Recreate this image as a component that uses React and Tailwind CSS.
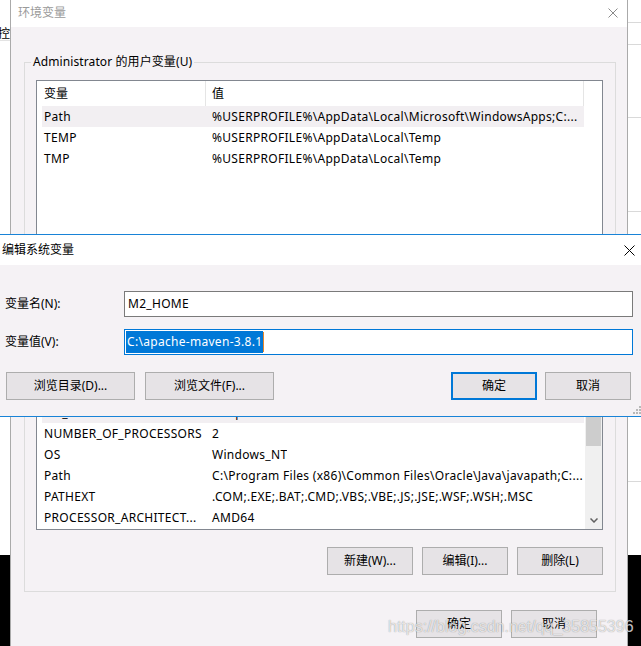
import clsx from 'clsx'

const userVars = [
  ['Path', String.raw`%USERPROFILE%\AppData\Local\Microsoft\WindowsApps;C:...`, true],
  ['TEMP', String.raw`%USERPROFILE%\AppData\Local\Temp`],
  ['TMP', String.raw`%USERPROFILE%\AppData\Local\Temp`],
]

const sysVars = [
  ['ComSpec', String.raw`C:\Windows\system32\cmd.exe`],
  ['DriverData', String.raw`C:\Windows\System32\Drivers\DriverData`],
  ['JAVA_HOME', String.raw`C:\Program Files\Java\jdk1.8.0_291`],
  ['M2_HOME', String.raw`C:\apache-maven-3.8.1`, true],
  ['NUMBER_OF_PROCESSORS', '2'],
  ['OS', 'Windows_NT'],
  ['Path', String.raw`C:\Program Files (x86)\Common Files\Oracle\Java\javapath;C:...`],
  ['PATHEXT', '.COM;.EXE;.BAT;.CMD;.VBS;.VBE;.JS;.JSE;.WSF;.WSH;.MSC'],
  ['PROCESSOR_ARCHITECT...', 'AMD64'],
]

function CloseX({ size = 10, color = '#000' }) {
  return (
    <svg width={size} height={size} viewBox={`0 0 ${size} ${size}`} className="shrink-0">
      <path d={`M0.5 0.5L${size - 0.5} ${size - 0.5}M${size - 0.5} 0.5L0.5 ${size - 0.5}`} stroke={color} strokeWidth="1" />
    </svg>
  )
}

function Btn({ children, className, primary }) {
  return (
    <div
      className={clsx(
        'flex h-[28px] w-[86px] shrink-0 items-center justify-center bg-[#e6e3e6]',
        primary ? 'border-2 border-[#0078d7]' : 'border border-[#adadad]',
        className,
      )}
    >
      {children}
    </div>
  )
}

function Row({ name, value, selected }) {
  return (
    <div className={clsx('ml-[5px] flex h-[21px] w-[542px] shrink-0 items-center tracking-[0.3px]', selected && 'bg-[#f2eff2]')}>
      <span className="w-[164px] shrink-0 overflow-hidden whitespace-nowrap pl-[2px]">{name}</span>
      <span className="overflow-hidden whitespace-nowrap pl-[6px]">{value}</span>
    </div>
  )
}

function Header() {
  return (
    <div className="ml-[5px] flex h-[25px] w-[542px] shrink-0">
      <span className="flex w-[164px] items-center border-r border-[#e5e5e5] pl-[2px]">变量</span>
      <span className="flex flex-1 items-center border-r border-[#e5e5e5] pl-[6px]">值</span>
    </div>
  )
}

function Scrollbar() {
  return (
    <div className="flex w-[17px] shrink-0 flex-col bg-[#f0f0f0]">
      <div className="flex h-[17px] shrink-0 items-center justify-center">
        <svg width="8" height="5" viewBox="0 0 8 5">
          <path d="M0.5 4.5L4 1L7.5 4.5" fill="none" stroke="#606060" strokeWidth="1.5" />
        </svg>
      </div>
      <div className="mx-[1px] mt-[23px] h-[59px] shrink-0 bg-[#cdcdcd]" />
      <div className="flex-1" />
      <div className="flex h-[17px] shrink-0 items-center justify-center">
        <svg width="8" height="5" viewBox="0 0 8 5">
          <path d="M0.5 0.5L4 4L7.5 0.5" fill="none" stroke="#606060" strokeWidth="1.5" />
        </svg>
      </div>
    </div>
  )
}

function ListBox({ rows, height, scroll }) {
  return (
    <div className={clsx('flex w-[567px] border border-[#828790] bg-white', height)}>
      <div className="flex min-w-0 flex-1 flex-col">
        <Header />
        <div className={clsx('flex min-h-0 flex-1 flex-col overflow-hidden', scroll && 'justify-end pb-[1px]')}>
          {rows.map(([n, v, s]) => (
            <Row key={n} name={n} value={v} selected={s} />
          ))}
        </div>
      </div>
      {scroll && <Scrollbar />}
    </div>
  )
}

function Group({ label, rows, listHeight, scroll, buttons, className }) {
  return (
    <fieldset className={clsx('w-[592px] border border-[#dcdcdc]', className)}>
      <legend className="ml-[6px] px-[2px] leading-[16px] tracking-[0.1px]">{label}</legend>
      <div className="px-[11px] pb-[16px] pt-[10px]">
        <ListBox rows={rows} height={listHeight} scroll={scroll} />
        <div className="mt-[17px] flex justify-end gap-[9px] pr-[1px]">
          {buttons.map((b) => (
            <Btn key={b}>{b}</Btn>
          ))}
        </div>
      </div>
    </fieldset>
  )
}

function EnvWindow() {
  return (
    <div className="flex w-[618px] shrink-0 flex-col border-x border-[#aaaaaa] bg-[#f5f2f5]">
      <div className="flex h-[27px] shrink-0 items-center justify-between bg-white pb-[2px] pl-[7px] pr-[9px] text-[#9a9a9a]">
        <span>环境变量</span>
        <CloseX size={10} color="#8a8a8a" />
      </div>
      <div className="flex flex-col pl-[13px] pt-[27px]">
        <Group
          label="Administrator 的用户变量(U)"
          rows={userVars}
          listHeight="h-[170px]"
          buttons={['新建(N)...', '编辑(E)...', '删除(D)']}
        />
        <Group
          label="系统变量(S)"
          rows={sysVars}
          listHeight="h-[184px]"
          scroll
          className="mt-[8px]"
          buttons={['新建(W)...', '编辑(I)...', '删除(L)']}
        />
        <div className="mt-[18px] flex justify-end gap-[9px] pr-[30px]">
          <Btn>确定</Btn>
          <Btn>取消</Btn>
        </div>
      </div>
    </div>
  )
}

function LeftEdge() {
  return (
    <div className="flex w-[10px] shrink-0 flex-col overflow-hidden">
      <div className="h-[27px] shrink-0" />
      <div className="h-[14px] shrink-0 overflow-hidden border-b border-[#e3e3e3] leading-[13px]">
        <span className="-ml-[2px] block whitespace-nowrap">控</span>
      </div>
      <div className="flex-1" />
      <div className="h-[91px] shrink-0 bg-black" />
    </div>
  )
}

function RightEdge() {
  return (
    <div className="flex w-[13px] shrink-0 flex-col">
      <div className="h-[23px] shrink-0 border-b border-[#d9d9d9]" />
      <div className="h-[22px] shrink-0 border-b border-[#d9d9d9]" />
      <div className="h-[73px] shrink-0 border-b border-[#d9d9d9]" />
      <div className="h-[94px] shrink-0 border-b border-[#d9d9d9]" />
      <div className="h-[270px] shrink-0 border-b border-[#d9d9d9]" />
      <div className="flex-1" />
      <div className="h-[91px] shrink-0 bg-black" />
    </div>
  )
}

function EditDialog() {
  return (
    <div className="absolute left-[-1px] top-[234px] flex h-[183px] w-[645px] flex-col border border-[#1883d7] bg-[#f5f2f5]">
      <div className="flex h-[30px] shrink-0 items-center justify-between bg-white pl-[2px] pr-[8px]">
        <span>编辑系统变量</span>
        <CloseX size={11} />
      </div>
      <div className="relative flex flex-1 flex-col pt-[26px]">
        <div className="flex items-center">
          <span className="w-[124px] shrink-0 pl-[5px]">变量名(N):</span>
          <div className="flex h-[26px] w-[509px] items-center border border-[#7a7a7a] bg-white pl-[3px] tracking-[0.3px]">M2_HOME</div>
        </div>
        <div className="mt-[12px] flex items-center">
          <span className="w-[124px] shrink-0 pl-[5px]">变量值(V):</span>
          <div className="flex h-[26px] w-[509px] items-center border border-[#0078d7] bg-white pl-[1px]">
            <span className="flex h-[22px] items-center bg-[#0078d7] px-[1px] tracking-[0.3px] text-white">C:\apache-maven-3.8.1</span>
            <span className="h-[20px] w-px bg-[#e8862a]" />
          </div>
        </div>
        <div className="mt-[17px] flex pl-[6px]">
          <Btn className="w-[129px]">浏览目录(D)...</Btn>
          <Btn className="ml-[10px] w-[129px]">浏览文件(F)...</Btn>
          <Btn primary className="ml-[177px]">确定</Btn>
          <Btn className="ml-[8px]">取消</Btn>
        </div>
        <svg width="8" height="8" viewBox="0 0 8 8" className="absolute bottom-[2px] right-[2px]">
          <g fill="#b8b8b8">
            <rect x="6" y="0" width="2" height="2" />
            <rect x="3" y="3" width="2" height="2" />
            <rect x="6" y="3" width="2" height="2" />
            <rect x="0" y="6" width="2" height="2" />
            <rect x="3" y="6" width="2" height="2" />
            <rect x="6" y="6" width="2" height="2" />
          </g>
        </svg>
      </div>
    </div>
  )
}

export default function App() {
  return (
    <div className="relative flex h-[646px] w-[641px] overflow-hidden bg-white font-['Noto_Sans','Noto_Sans_CJK_SC',sans-serif] text-[12px] leading-[16px] text-black">
      <LeftEdge />
      <EnvWindow />
      <RightEdge />
      <EditDialog />
      <div className="pointer-events-none absolute left-[388px] top-[617px] whitespace-nowrap font-['Liberation_Sans',sans-serif] text-[16px] leading-[20px] text-white/75 [text-shadow:0_0_1px_rgba(0,0,0,0.45)]">
        https://blog.csdn.net/qq_35855396
      </div>
    </div>
  )
}
